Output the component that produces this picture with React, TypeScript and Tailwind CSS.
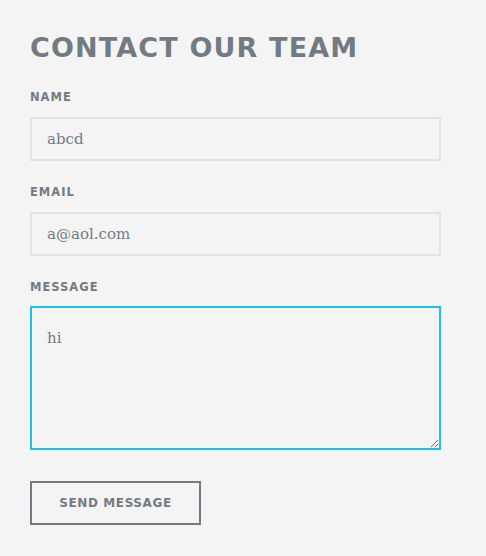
import React, { useState } from "react";

export default function App() {
  const [name, setName] = useState("abcd");
  const [email, setEmail] = useState("a@aol.com");
  const [msg, setMsg] = useState("hi");
  const labelCls =
    "block text-[11.5px] leading-[16px] font-bold tracking-[1px] text-[#737b82] [font-family:'DejaVu_Sans',sans-serif]";
  const inputCls =
    "block w-[411px] h-[44px] border-2 border-[#e2e2e2] bg-[#f4f4f4] px-[15px] text-[15px] text-[#737b82] outline-none [font-family:'DejaVu_Serif',serif]";
  return (
    <div className="min-h-[556px] w-full bg-[#f4f4f4] pl-[30px] pt-[30px]">
      <h1 className="text-[27px] leading-[36px] font-bold tracking-[1.15px] text-[#737b82] [font-family:'DejaVu_Sans',sans-serif]">
        CONTACT OUR TEAM
      </h1>
      <form onSubmit={(e) => e.preventDefault()}>
        <label className={`${labelCls} mt-[23px]`}>NAME</label>
        <input
          className={`${inputCls} mt-[12px]`}
          value={name}
          onChange={(e) => setName(e.target.value)}
        />
        <label className={`${labelCls} mt-[23px]`}>EMAIL</label>
        <input
          className={`${inputCls} mt-[12px]`}
          value={email}
          onChange={(e) => setEmail(e.target.value)}
        />
        <label className={`${labelCls} mt-[23px]`}>MESSAGE</label>
        <textarea
          className="block mt-[11px] w-[411px] h-[144px] border-2 border-[#1ec0ef] bg-[#f4f4f4] px-[15px] py-[20px] text-[15px] leading-[20px] text-[#737b82] outline-none [font-family:'DejaVu_Serif',serif]"
          value={msg}
          onChange={(e) => setMsg(e.target.value)}
        />
        <button
          type="submit"
          className="block mt-[31px] w-[171px] h-[44px] border-2 border-[#737b82] bg-transparent text-[12px] font-bold tracking-[0.6px] text-[#737b82] [font-family:'DejaVu_Sans',sans-serif]"
        >
          SEND MESSAGE
        </button>
      </form>
    </div>
  );
}
